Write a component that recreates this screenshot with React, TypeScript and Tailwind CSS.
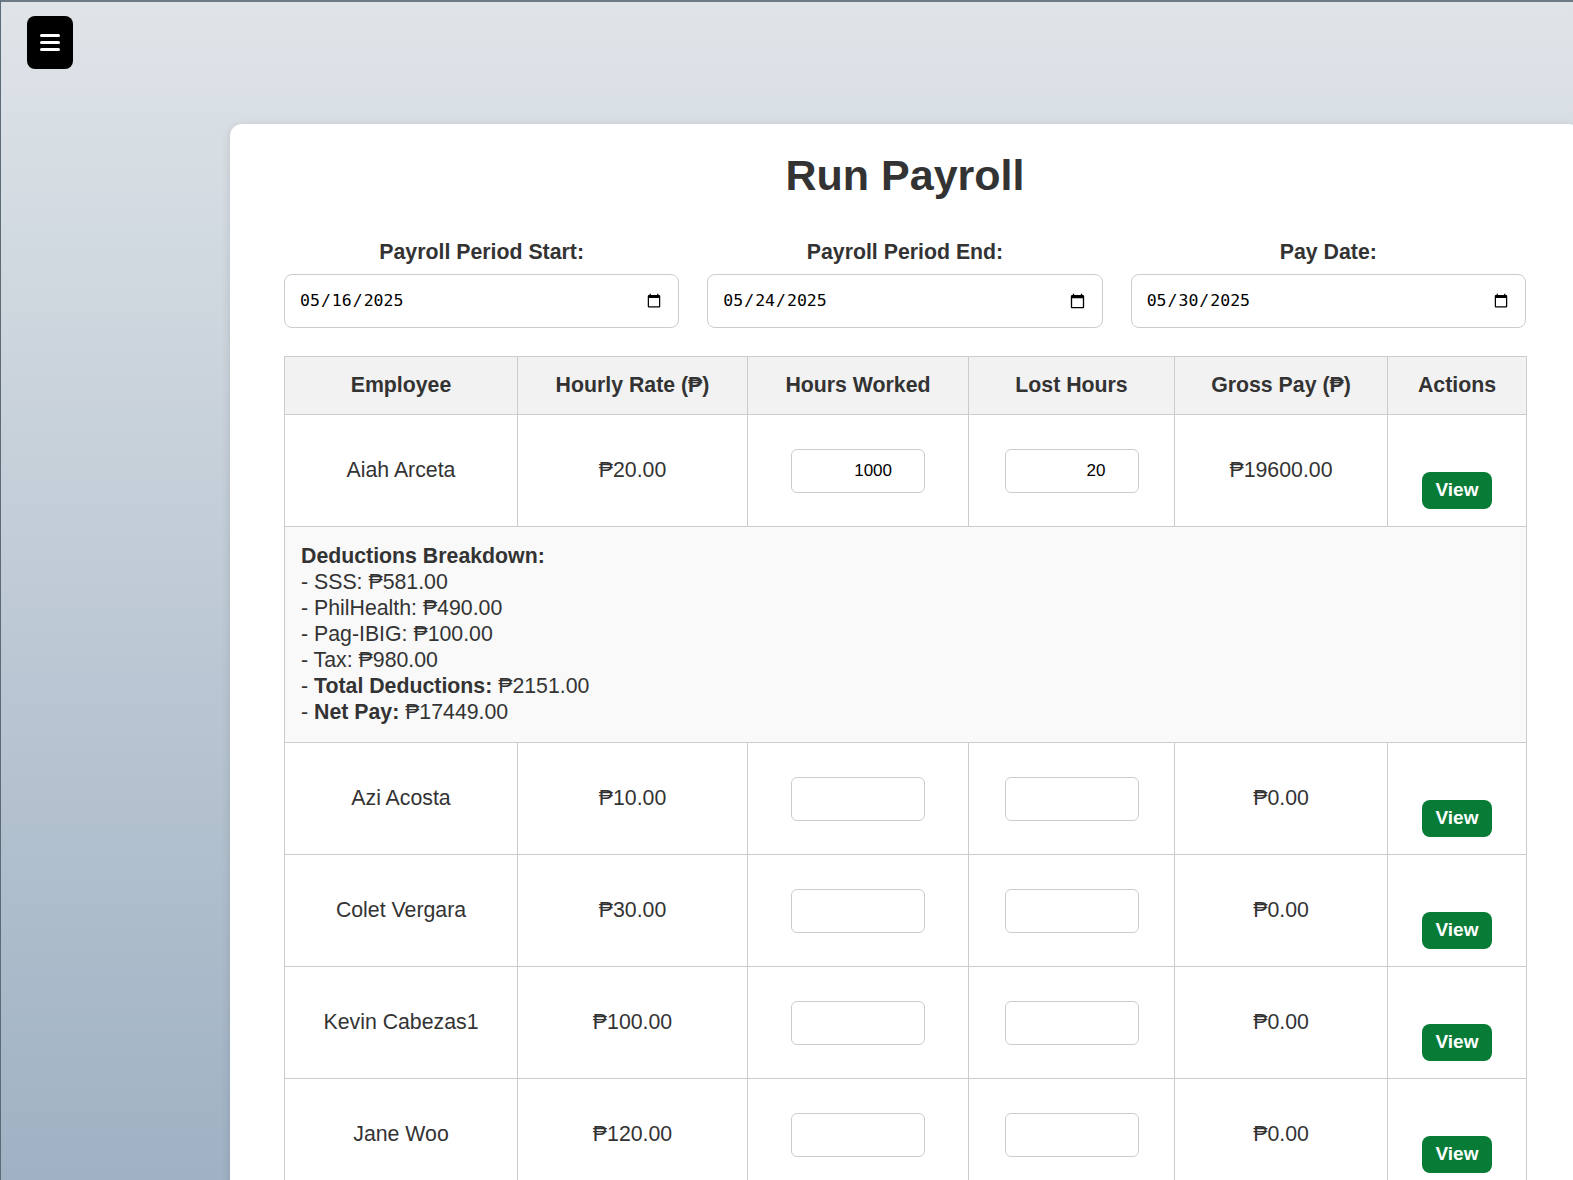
import { useState } from "react"

type Employee = {
  id: number
  name: string
  rate: number
  hours: string
  lost: string
}

const employees: Employee[] = [
  { id: 1, name: "Aiah Arceta", rate: 20, hours: "1000", lost: "20" },
  { id: 2, name: "Azi Acosta", rate: 10, hours: "", lost: "" },
  { id: 3, name: "Colet Vergara", rate: 30, hours: "", lost: "" },
  { id: 4, name: "Kevin Cabezas1", rate: 100, hours: "", lost: "" },
  { id: 5, name: "Jane Woo", rate: 120, hours: "", lost: "" },
]

const peso = (n: number) => `₱${n.toFixed(2)}`

function DateField({ label, value }: { label: string; value: string }) {
  return (
    <div className="flex flex-col items-center gap-[9px]">
      <label className="text-[21.3px] leading-[25px] font-bold text-[#333]">{label}</label>
      <input
        type="date"
        defaultValue={value}
        className="w-full h-[54px] rounded-lg border border-[#ccc] bg-white px-[14px] text-[16.5px] text-black font-['DejaVu_Sans_Mono',monospace]"
      />
    </div>
  )
}

export default function App() {
  const [rows, setRows] = useState(employees)

  const update = (id: number, key: "hours" | "lost", v: string) =>
    setRows((r) => r.map((e) => (e.id === id ? { ...e, [key]: v } : e)))

  const gross = (e: Employee) => {
    const h = Number(e.hours) || 0
    const l = Number(e.lost) || 0
    return Math.max(0, (h - l) * e.rate)
  }

  return (
    <div className="h-[1180px] overflow-hidden border-t-2 border-l border-t-[#6b7a85] border-l-[#5d6b77] bg-gradient-to-b from-[#dfe4e8] to-[#9fb1c3] font-['Liberation_Sans',Arial,sans-serif]">
      <div className="pt-[14px] pl-[26px]">
        <button className="w-[46px] h-[53px] rounded-lg bg-black flex flex-col items-center justify-center gap-[4.5px]">
          <span className="block w-[20px] h-[2.5px] rounded-sm bg-white" />
          <span className="block w-[20px] h-[2.5px] rounded-sm bg-white" />
          <span className="block w-[20px] h-[2.5px] rounded-sm bg-white" />
        </button>
      </div>

      <div className="mt-[55px] ml-[229px] w-[1350px] rounded-xl bg-white shadow-[0_2px_10px_rgba(0,0,0,0.12)] pl-[54px] pr-[54px] pt-[26px] pb-10">
        <h1 className="text-center text-[43px] leading-[50px] font-bold text-[#333]">Run Payroll</h1>

        <div className="mt-[40px] grid w-[1242px] grid-cols-3 gap-[28px]">
          <DateField label="Payroll Period Start:" value="2025-05-16" />
          <DateField label="Payroll Period End:" value="2025-05-24" />
          <DateField label="Pay Date:" value="2025-05-30" />
        </div>

        <table className="mt-[28px] w-[1242px] table-fixed border-collapse text-[21.3px] text-[#333]">
          <colgroup>
            <col className="w-[233px]" />
            <col className="w-[230px]" />
            <col className="w-[221px]" />
            <col className="w-[206px]" />
            <col className="w-[213px]" />
            <col className="w-[139px]" />
          </colgroup>
          <thead>
            <tr className="h-[58px] bg-[#f2f2f2]">
              {["Employee", "Hourly Rate (₱)", "Hours Worked", "Lost Hours", "Gross Pay (₱)", "Actions"].map((h) => (
                <th key={h} className="border border-[#ccc] font-bold text-center">
                  {h}
                </th>
              ))}
            </tr>
          </thead>
          <tbody>
            {rows.map((e, i) => (
              <>
                <tr key={e.id} className="h-[112px] text-center">
                  <td className="border border-[#ccc]">{e.name}</td>
                  <td className="border border-[#ccc]">{peso(e.rate)}</td>
                  <td className="border border-[#ccc]">
                    <input
                      value={e.hours}
                      onChange={(ev) => update(e.id, "hours", ev.target.value)}
                      className="mx-auto block w-[134px] h-[44px] rounded-md border border-[#ccc] pr-[32px] text-right text-[17px] text-black"
                    />
                  </td>
                  <td className="border border-[#ccc]">
                    <input
                      value={e.lost}
                      onChange={(ev) => update(e.id, "lost", ev.target.value)}
                      className="mx-auto block w-[134px] h-[44px] rounded-md border border-[#ccc] pr-[32px] text-right text-[17px] text-black"
                    />
                  </td>
                  <td className="border border-[#ccc]">{peso(gross(e))}</td>
                  <td className="border border-[#ccc]">
                    <button className="mt-10 h-[37px] px-[14px] rounded-lg bg-[#087b37] text-white font-bold text-[19px]">
                      View
                    </button>
                  </td>
                </tr>
                {i === 0 && (
                  <tr key="deductions" className="bg-[#f9f9f9]">
                    <td colSpan={6} className="border border-[#ccc] px-4 pt-[16px] pb-[17px] text-left leading-[26px]">
                      <div className="font-bold">Deductions Breakdown:</div>
                      <div>- SSS: ₱581.00</div>
                      <div>- PhilHealth: ₱490.00</div>
                      <div>- Pag-IBIG: ₱100.00</div>
                      <div>- Tax: ₱980.00</div>
                      <div>
                        - <span className="font-bold">Total Deductions:</span> ₱2151.00
                      </div>
                      <div>
                        - <span className="font-bold">Net Pay:</span> ₱17449.00
                      </div>
                    </td>
                  </tr>
                )}
              </>
            ))}
          </tbody>
        </table>
      </div>
    </div>
  )
}
